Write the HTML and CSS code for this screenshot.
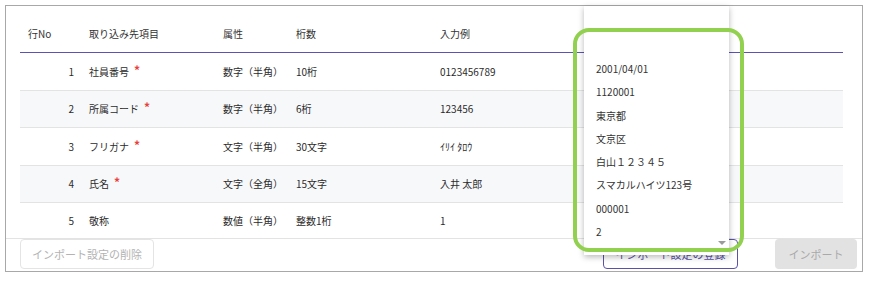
FILE: index.html
```html
<!DOCTYPE html>
<html lang="ja">
<head>
<meta charset="utf-8">
<link rel="stylesheet" href="styles.css">
</head>
<body>
<div class="frame">
  <div class="table">
    <div class="row head">
      <div class="c1 hno">行No</div>
      <div>取り込み先項目</div>
      <div>属性</div>
      <div>桁数</div>
      <div>入力例</div>
    </div>
    <div class="row">
      <div class="c1">1</div>
      <div>社員番号<span class="req">*</span></div>
      <div>数字（半角）</div>
      <div>10桁</div>
      <div>0123456789</div>
    </div>
    <div class="row alt">
      <div class="c1">2</div>
      <div>所属コード<span class="req">*</span></div>
      <div>数字（半角）</div>
      <div>6桁</div>
      <div>123456</div>
    </div>
    <div class="row">
      <div class="c1">3</div>
      <div>フリガナ<span class="req">*</span></div>
      <div>文字（半角）</div>
      <div>30文字</div>
      <div>ｲﾘｲ ﾀﾛｳ</div>
    </div>
    <div class="row alt">
      <div class="c1">4</div>
      <div>氏名<span class="req">*</span></div>
      <div>文字（全角）</div>
      <div>15文字</div>
      <div>入井 太郎</div>
    </div>
    <div class="row last">
      <div class="c1">5</div>
      <div>敬称</div>
      <div>数値（半角）</div>
      <div>整数1桁</div>
      <div>1</div>
    </div>
  </div>
  <div class="footer">
    <button class="btn btn-ghost">インポート設定の削除</button>
    <div class="actions">
      <button class="btn btn-outline">インポート設定の登録</button>
      <button class="btn btn-disabled">インポート</button>
    </div>
  </div>

  <div class="dropdown">
    <div class="opt">2001/04/01</div>
    <div class="opt">1120001</div>
    <div class="opt">東京都</div>
    <div class="opt">文京区</div>
    <div class="opt">白山１２３４５</div>
    <div class="opt">スマカルハイツ123号</div>
    <div class="opt">000001</div>
    <div class="opt">2</div>
    <span class="arrow"></span>
  </div>
  <div class="highlight"></div>
</div>
</body>
</html>
```

FILE: styles.css
```css
* { box-sizing: border-box; }
html, body { margin: 0; padding: 0; background: #fff; }
body {
  font-family: "Noto Sans CJK JP", "Noto Sans", sans-serif;
  color: #2b2b2b;
  font-size: 10px;
}
.frame {
  position: relative;
  margin: 5px 0 0 5px;
  width: 858px;
  height: 267px;
  border: 1px solid #a8a8a8;
  display: flex;
  flex-direction: column;
}
.table {
  flex: 1;
  display: flex;
  flex-direction: column;
  margin: 0 19px 0 14px;
}
.row {
  display: grid;
  grid-template-columns: 55px 120px 59px 130px 1fr;
  column-gap: 14px;
  align-items: center;
  height: 37.5px;
  border-bottom: 1px solid #e3e3e3;
}
.row.alt { background: #f7f8fa; }
.row.head {
  height: 47px;
  padding-top: 8px;
  border-bottom: 1px solid #5b53b4;
  color: #333;
}
.row.last { flex: 1; border-bottom: none; }
.c1 { text-align: right; padding-right: 1px; }
.c1.hno { text-align: left; padding-left: 8px; }
.req {
  color: #e8403c;
  font-size: 12px;
  font-weight: 700;
  margin-left: 5px;
  position: relative;
  top: -1px;
  line-height: 1;
}
.footer {
  height: 33px;
  border-top: 1px solid #e3e3e3;
  display: flex;
  justify-content: space-between;
  align-items: flex-start;
  padding: 0 5px 0 14px;
}
.actions { display: flex; gap: 37px; }
.btn {
  font-family: inherit;
  font-size: 11px;
  height: 30px;
  border-radius: 4px;
  padding: 0;
  background: #fff;
}
.btn-ghost {
  width: 134px;
  border: 1px solid #e4e4e4;
  color: #b3b3b3;
}
.btn-outline {
  width: 135px;
  border: 1px solid #5b52a8;
  color: #5b52a8;
}
.btn-disabled {
  width: 82px;
  border: none;
  background: #e2e2e2;
  color: #a9a9a9;
}
.dropdown {
  position: absolute;
  left: 578px;
  top: 0;
  width: 145px;
  height: 249px;
  background: #fff;
  box-shadow: 0 2px 6px rgba(0, 0, 0, 0.28);
  padding: 51px 0 0 12px;
  color: #333;
}
.opt {
  height: 23.3px;
  line-height: 23.3px;
  white-space: nowrap;
}
.arrow {
  position: absolute;
  right: 3px;
  bottom: 10px;
  width: 0;
  height: 0;
  border-left: 4px solid transparent;
  border-right: 4px solid transparent;
  border-top: 4px solid #9b9b9b;
}
.highlight {
  position: absolute;
  left: 567px;
  top: 22px;
  width: 171px;
  height: 224px;
  border: 4px solid #92d050;
  border-radius: 16px;
  pointer-events: none;
}
```
